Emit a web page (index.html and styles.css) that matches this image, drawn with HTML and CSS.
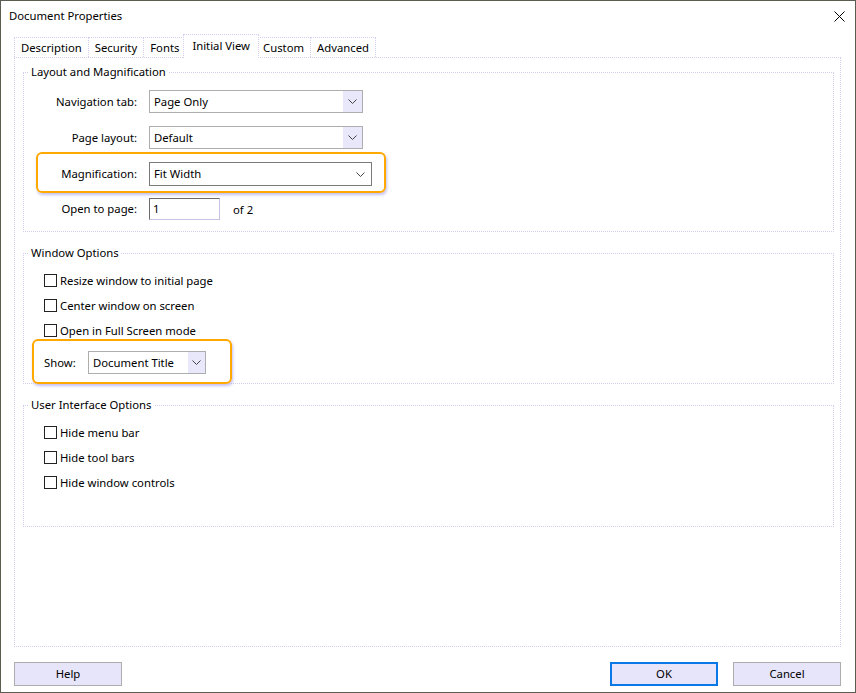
FILE: index.html
```html
<!DOCTYPE html>
<html lang="en">
<head>
    <meta charset="UTF-8">
    <meta name="viewport" content="width=device-width, initial-scale=1.0">
    <title>Document Properties</title>
    <link rel="stylesheet" href="styles.css">
</head>
<body>
    <div class="dialog">
        <div class="titlebar">
            <span class="title">Document Properties</span>
            <svg class="close" width="11" height="11" viewBox="0 0 11 11">
                <path d="M0.5 0.5 L10.5 10.5 M10.5 0.5 L0.5 10.5" stroke="#000" stroke-width="1" fill="none"/>
            </svg>
        </div>

        <!-- tab strip -->
        <div class="tabs">
            <div class="tab">Description</div>
            <div class="tab">Security</div>
            <div class="tab">Fonts</div>
            <div class="tab selected">Initial View</div>
            <div class="tab">Custom</div>
            <div class="tab">Advanced</div>
        </div>

        <div class="panel">
            <fieldset class="group">
                <legend>Layout and Magnification</legend>
                <div class="fields">
                    <div class="field-row">
                        <span class="field-label">Navigation tab:</span>
                        <div class="select wide">
                            <span class="select-value">Page Only</span>
                            <span class="select-arrow"><svg width="9" height="5" viewBox="0 0 9 5"><path d="M0.5 0.5 L4.5 4.5 L8.5 0.5" stroke="#444" fill="none"/></svg></span>
                        </div>
                    </div>
                    <div class="field-row">
                        <span class="field-label">Page layout:</span>
                        <div class="select wide">
                            <span class="select-value">Default</span>
                            <span class="select-arrow"><svg width="9" height="5" viewBox="0 0 9 5"><path d="M0.5 0.5 L4.5 4.5 L8.5 0.5" stroke="#444" fill="none"/></svg></span>
                        </div>
                    </div>
                    <div class="field-row highlight mag-row">
                        <span class="field-label">Magnification:</span>
                        <div class="select wider plain">
                            <span class="select-value">Fit Width</span>
                            <span class="select-arrow"><svg width="9" height="5" viewBox="0 0 9 5"><path d="M0.5 0.5 L4.5 4.5 L8.5 0.5" stroke="#444" fill="none"/></svg></span>
                        </div>
                    </div>
                    <div class="field-row page-row">
                        <span class="field-label">Open to page:</span>
                        <div class="text-input">1</div>
                        <span class="page-count">of 2</span>
                    </div>
                </div>
            </fieldset>

            <fieldset class="group">
                <legend>Window Options</legend>
                <div class="checks">
                    <label class="check"><span class="box"></span>Resize window to initial page</label>
                    <label class="check"><span class="box"></span>Center window on screen</label>
                    <label class="check"><span class="box"></span>Open in Full Screen mode</label>
                </div>
                <div class="highlight show-row">
                    <span class="show-label">Show:</span>
                    <div class="select narrow">
                        <span class="select-value">Document Title</span>
                        <span class="select-arrow"><svg width="9" height="5" viewBox="0 0 9 5"><path d="M0.5 0.5 L4.5 4.5 L8.5 0.5" stroke="#444" fill="none"/></svg></span>
                    </div>
                </div>
            </fieldset>

            <fieldset class="group last">
                <legend>User Interface Options</legend>
                <div class="checks">
                    <label class="check"><span class="box"></span>Hide menu bar</label>
                    <label class="check"><span class="box"></span>Hide tool bars</label>
                    <label class="check"><span class="box"></span>Hide window controls</label>
                </div>
            </fieldset>
        </div>

        <div class="buttons">
            <button class="btn">Help</button>
            <span class="spacer"></span>
            <button class="btn default">OK</button>
            <button class="btn cancel">Cancel</button>
        </div>
    </div>
</body>
</html>
```

FILE: styles.css
```css
html, body {
    margin: 0;
    padding: 0;
    background: #fff;
}
body {
    font-family: "Noto Sans", "DejaVu Sans", sans-serif;
    font-size: 11.3px;
    color: #000;
}
.dialog {
    width: 856px;
    height: 693px;
    box-sizing: border-box;
    border: 1px solid #5c5c50;
    padding: 0 14px 0 13px;
    display: flex;
    flex-direction: column;
    background: #fff;
}

/* title bar */
.titlebar {
    height: 30px;
    box-sizing: border-box;
    margin: 0 -9px 0 -5px;
    padding: 0 5px 2px 0;
    display: flex;
    align-items: center;
    justify-content: space-between;
}
.close {
    margin-top: 2px;
}

/* tabs */
.tabs {
    height: 26px;
    display: flex;
    align-items: flex-end;
    padding-left: 1px;
}
.tab {
    height: 20px;
    box-sizing: border-box;
    border: 1px dotted #d2cef0;
    border-bottom: none;
    margin-left: -1px;
    padding: 1px 6px 0 6px;
    line-height: 18px;
    background: #fff;
}
.tab.selected {
    height: 24px;
    margin: 0 -2px -1px -3px;
    padding: 0 8px;
    line-height: 21px;
    position: relative;
    z-index: 1;
}

/* tab page */
.panel {
    height: 590px;
    box-sizing: border-box;
    border: 1px dotted #d2cef0;
    padding: 6px 6px 0 8px;
}
.group {
    margin: 0 0 13px 0;
    border: 1px dotted #d2cef0;
    padding: 10px 0 11px 0;
    min-width: 0;
}
.group legend {
    margin-left: 5px;
    padding: 0 2px;
    line-height: 16px;
}
.fields {
    margin-left: 14px;
}
.field-row {
    display: flex;
    align-items: center;
    margin-bottom: 13px;
}
.field-label {
    width: 99px;
    margin-right: 12px;
    text-align: right;
    padding-bottom: 1px;
}
.mag-row {
    width: fit-content;
    margin: -10px 0 0 -2px;
    padding: 8px 12px 5px 0;
}
.page-row {
    margin: 5px 0 0 0;
}

/* orange call-out frame */
.highlight {
    border: 2px solid #ffa800;
    border-radius: 6px;
    box-shadow: 1px 2px 3px rgba(170, 165, 235, 0.7);
}

/* combo boxes */
.select {
    height: 23px;
    box-sizing: border-box;
    border: 1px solid #adadad;
    background: #fff;
    display: flex;
    align-items: stretch;
}
.select.wide {
    width: 214px;
}
.select.wider {
    width: 223px;
    height: 24px;
}
.select.narrow {
    width: 118px;
}
.select.plain {
    border-color: #7a7a7a;
}
.select-value {
    flex: 1;
    padding: 0 0 1px 4px;
    display: flex;
    align-items: center;
    white-space: nowrap;
}
.select-arrow {
    width: 19px;
    display: flex;
    align-items: center;
    justify-content: center;
    background: #e9e8fa;
}
.select.plain .select-arrow {
    width: 21px;
    background: none;
}
.select.narrow .select-arrow {
    width: 17px;
}

.text-input {
    width: 71px;
    height: 22px;
    box-sizing: border-box;
    border: 1px solid #c6c3e6;
    border-top-color: #6d6d6d;
    border-left-color: #6d6d6d;
    padding-left: 3px;
    line-height: 19px;
}
.page-count {
    margin-left: 13px;
}

/* check boxes */
.checks {
    margin-left: 20px;
    display: flex;
    flex-direction: column;
    gap: 5px;
}
.check {
    height: 20px;
    display: flex;
    align-items: center;
}
.box {
    width: 13px;
    height: 13px;
    box-sizing: border-box;
    border: 1px solid #222;
    margin-right: 3px;
    background: #fff;
}
.group .show-row {
    display: flex;
    align-items: center;
    width: fit-content;
    margin: -1px 0 -1px 8px;
    padding: 10px 24px 8px 10px;
}
.show-label {
    width: 44px;
}
.group.last {
    padding-bottom: 34px;
}
.group + .group {
    padding-top: 9px;
}
.group:nth-child(2) {
    padding-bottom: 0;
}

/* bottom buttons */
.buttons {
    margin-top: 15px;
    display: flex;
}
.spacer {
    flex: 1;
}
.btn {
    width: 108px;
    height: 24px;
    box-sizing: border-box;
    border: 1px solid #adadad;
    background: #e6e5fa;
    font-family: inherit;
    font-size: 11.3px;
    color: #000;
    padding: 0 0 1px 0;
}
.btn.default {
    border: 2px solid #0a78e6;
}
.btn.cancel {
    margin-left: 15px;
}
```
